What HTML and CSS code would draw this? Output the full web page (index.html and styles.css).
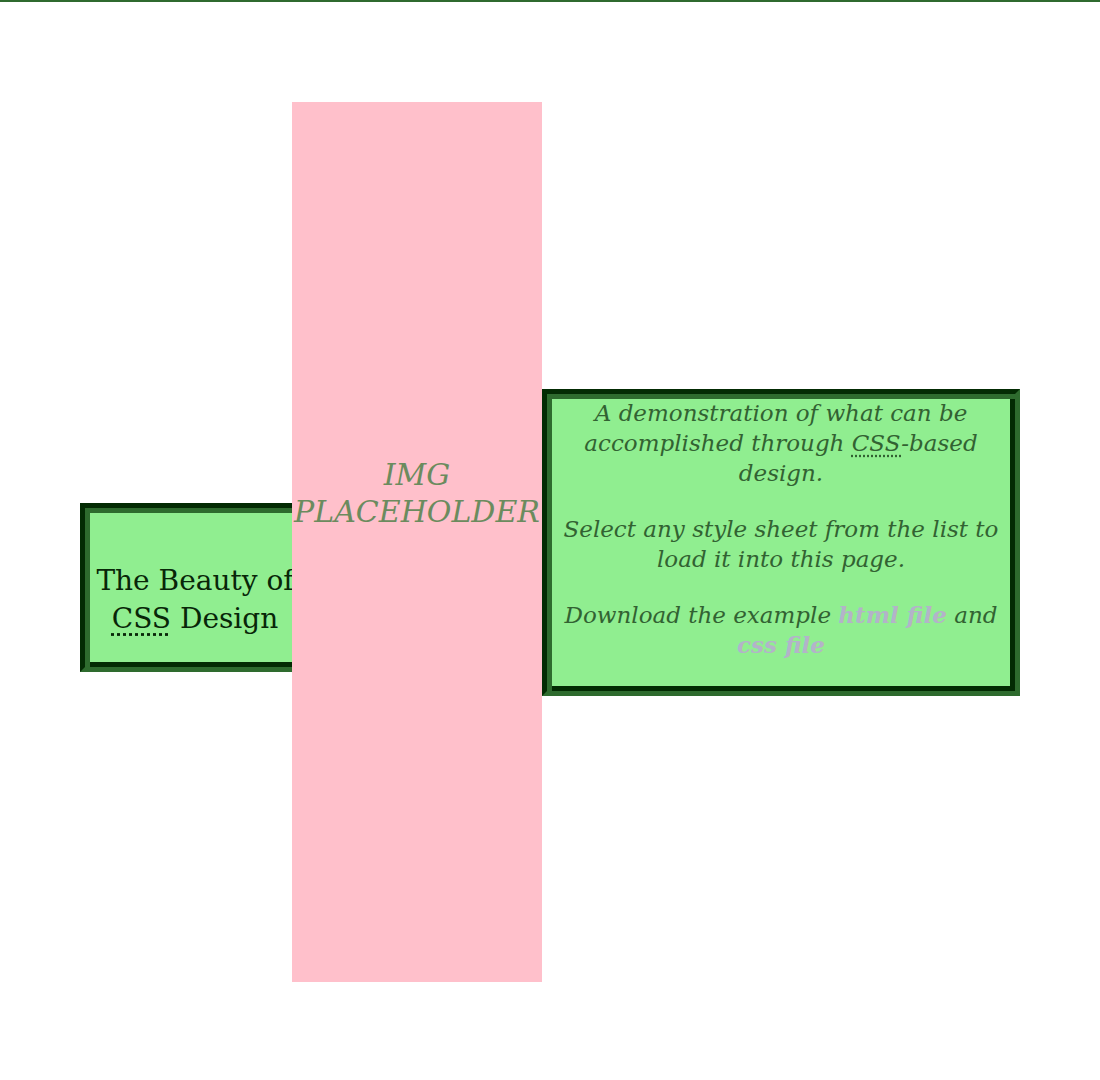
FILE: index.html
```html
<!DOCTYPE html>
<html lang="en">
<head>
<meta charset="utf-8">
<title>The Beauty of CSS Design</title>
<link rel="stylesheet" href="styles.css">
</head>
<body>
<div class="stage">
  <header class="title-box">
    <h1 class="title">The Beauty of <abbr title="Cascading Style Sheets">CSS</abbr> Design</h1>
  </header>
  <div class="placeholder">
    <p class="placeholder-text">IMG PLACEHOLDER</p>
  </div>
  <section class="summary">
    <p>A demonstration of what can be accomplished through <abbr title="Cascading Style Sheets">CSS</abbr>-based design.</p>
    <p>Select any style sheet from the list to load it into this page.</p>
    <p>Download the example <a href="#">html file</a> and <a href="#">css file</a></p>
  </section>
</div>
</body>
</html>
```
FILE: styles.css
```css
html {
  border-top: 2px solid #2f6a2f;
  background: #ffffff;
}
body {
  margin: 0;
  font-family: "DejaVu Serif", Georgia, serif;
}
.stage {
  display: flex;
  align-items: center;
  margin-top: 100px;
  padding-left: 80px;
}
.title-box,
.summary {
  background: #90ee90;
  border: 5px solid;
  border-color: #032b03 #2e6b2e #2e6b2e #032b03;
  box-shadow: inset 5px 5px 0 #2e6b2e, inset -5px -5px 0 #032b03;
}
.title-box {
  box-sizing: border-box;
  width: 230px;
  margin-top: 90px;
  margin-right: -18px;
  padding: 54px 0 29px;
  flex: none;
}
.title {
  margin: 0;
  font-size: 28px;
  font-weight: normal;
  line-height: 38px;
  color: #082608;
  text-align: center;
}
.title abbr {
  text-decoration: underline dotted;
  text-underline-offset: 6px;
}
.placeholder {
  position: relative;
  z-index: 1;
  flex: none;
  width: 250px;
  height: 880px;
  background: #ffc0cb;
  padding-top: 354px;
  box-sizing: border-box;
}
.placeholder-text {
  margin: 0;
  font-size: 30px;
  font-style: italic;
  line-height: 37px;
  color: #6b8b5e;
  text-align: center;
}
.summary {
  box-sizing: border-box;
  width: 478px;
  flex: none;
  padding: 4px 4px 31px;
  color: #326232;
  font-style: italic;
  font-size: 23px;
  line-height: 30px;
  text-align: center;
}
.summary p {
  margin: 0 0 26px;
}
.summary p:last-child {
  margin-bottom: 0;
}
.summary abbr {
  text-decoration: underline dotted;
  text-underline-offset: 5px;
}
.summary a {
  color: #b3b3c9;
  font-weight: bold;
  text-decoration: none;
}
```
